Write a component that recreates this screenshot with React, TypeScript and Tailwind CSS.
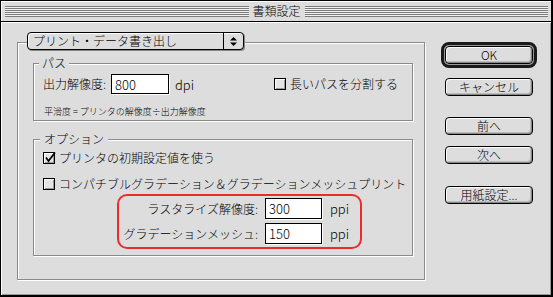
import React from "react";

function Stripes() {
  return (
    <div className="flex-1 h-[11px] flex flex-col justify-between bg-[#f2f2f2]">
      <div className="h-px bg-[#7b7b7b]" />
      <div className="h-px bg-[#7b7b7b]" />
      <div className="h-px bg-[#7b7b7b]" />
      <div className="h-px bg-[#7b7b7b]" />
      <div className="h-px bg-[#7b7b7b]" />
      <div className="h-px bg-[#7b7b7b]" />
    </div>
  );
}

function Checkbox({ checked }: { checked?: boolean }) {
  return (
    <span className="relative w-[12px] h-[12px] shrink-0 border border-black bg-[#e4e4e4] shadow-[inset_1px_1px_0_#fff,inset_-1px_-1px_0_#999]">
      {checked && (
        <svg
          className="absolute left-[-1px] top-[-2px] overflow-visible"
          width="13"
          height="13"
          viewBox="0 0 13 13"
        >
          <path d="M3 6.5 L5.5 10 L12 1.5" fill="none" stroke="#000" strokeWidth="1.7" />
        </svg>
      )}
    </span>
  );
}

function Button({ children }: { children: React.ReactNode }) {
  return (
    <div className="w-[88px] h-[18px] border border-black rounded-[4px] bg-[#dddddd] shadow-[inset_1px_1px_0_#fff,inset_-1px_-1px_0_#888,inset_-2px_-2px_0_#bbb] flex items-center justify-center text-[12px] leading-none">
      {children}
    </div>
  );
}

function Field({ value, h }: { value: string; h: string }) {
  return (
    <div
      className={`${h} border border-black bg-white shadow-[1px_1px_0_#fff] flex items-center pl-[3px] text-[13px] leading-none`}
    >
      {value}
    </div>
  );
}

export default function App() {
  return (
    <div className="w-[553px] h-[297px] flex flex-col border-l border-t border-r-2 border-b-2 border-black bg-[#dddddd] text-black font-['Noto_Sans_CJK_JP','Noto_Sans',sans-serif] font-light text-[12px] leading-none">
      {/* title bar */}
      <div className="h-[21px] shrink-0 border-b border-black flex items-center pl-[4px] pr-[3px] shadow-[inset_1px_1px_0_#fff]">
        <Stripes />
        <div className="px-[4px] text-[12px] leading-none">書類設定</div>
        <Stripes />
      </div>

      {/* content */}
      <div className="flex-1 flex pl-[16px] pt-[20px] shadow-[inset_1px_1px_0_#fff,inset_-1px_-1px_0_#999]">
        {/* left outer box */}
        <div className="relative w-[408px] h-[238px] border border-[#8a8a8a] shadow-[1px_1px_0_#fff,inset_1px_1px_0_#fff] pl-[15px] pt-[20px]">
          {/* popup */}
          <div className="absolute left-[9px] top-[-11px] w-[217px] h-[18px] flex border border-black rounded-[4px] bg-[#dddddd] shadow-[1px_1px_0_#888,inset_1px_1px_0_#fff]">
            <div className="flex-1 flex items-center pl-[5px]">プリント・データ書き出し</div>
            <div className="w-[20px] border-l border-black flex items-center justify-center">
              <svg width="7" height="11" viewBox="0 0 7 11">
                <path d="M0 4.5 L3.5 1 L7 4.5 Z" fill="#000" />
                <path d="M0 6.5 L3.5 10 L7 6.5 Z" fill="#000" />
              </svg>
            </div>
          </div>

          {/* path group */}
          <div className="relative w-[380px] h-[58px] border border-[#8a8a8a] shadow-[1px_1px_0_#fff,inset_1px_1px_0_#fff] pt-[10px] pl-[9px]">
            <div className="absolute left-[5px] top-[-7px] bg-[#dddddd] px-[3px]">パス</div>
            <div className="flex items-center h-[20px]">
              <div className="w-[68px]">出力解像度:</div>
              <Field value="800" h="w-[58px] h-[20px]" />
              <div className="ml-[6px] text-[13px]">dpi</div>
              <div className="ml-auto mr-[14px] flex items-center gap-[4px]">
                <Checkbox />
                <span>長いパスを分割する</span>
              </div>
            </div>
            <div className="mt-[13px] pl-[1px] text-[9px] leading-none">平滑度 = プリンタの解像度÷出力解像度</div>
          </div>

          {/* options group */}
          <div className="relative mt-[18px] w-[380px] h-[117px] border border-[#8a8a8a] shadow-[1px_1px_0_#fff,inset_1px_1px_0_#fff] pt-[10px] pl-[9px]">
            <div className="absolute left-[6px] top-[-7px] bg-[#dddddd] px-[4px]">オプション</div>
            <div className="flex items-center h-[16px] gap-[4px]">
              <Checkbox checked />
              <span>プリンタの初期設定値を使う</span>
            </div>
            <div className="flex items-center h-[16px] gap-[4px] mt-[10px]">
              <Checkbox />
              <span>コンパチブルグラデーション＆グラデーションメッシュプリント</span>
            </div>
            <div className="mt-[2px] ml-[74px] w-[245px] h-[55px] border-2 border-[#ee2b2b] rounded-[10px] pt-[2px]">
              <div className="flex items-center h-[21px]">
                <div className="w-[146px] text-right pr-[7px]">ラスタライズ解像度:</div>
                <Field value="300" h="w-[57px] h-[21px]" />
                <div className="ml-[8px] text-[13px]">ppi</div>
              </div>
              <div className="flex items-center h-[21px] mt-[4px]">
                <div className="w-[146px] text-right pr-[7px]">グラデーションメッシュ:</div>
                <Field value="150" h="w-[57px] h-[21px]" />
                <div className="ml-[8px] text-[13px]">ppi</div>
              </div>
            </div>
          </div>
        </div>

        {/* right buttons */}
        <div className="ml-[16px] flex flex-col w-[96px]">
          <div className="w-[96px] h-[26px] border-[3px] border-[#1a1a1a] rounded-[8px] p-px flex items-center justify-center bg-[#dddddd] shadow-[inset_0_0_0_1px_#999]">
            <Button>OK</Button>
          </div>
          <div className="ml-[4px] mt-[10px]">
            <Button>キャンセル</Button>
          </div>
          <div className="ml-[4px] mt-[21px]">
            <Button>前へ</Button>
          </div>
          <div className="ml-[4px] mt-[11px]">
            <Button>次へ</Button>
          </div>
          <div className="ml-[4px] mt-[22px]">
            <Button>用紙設定...</Button>
          </div>
        </div>
      </div>
    </div>
  );
}
